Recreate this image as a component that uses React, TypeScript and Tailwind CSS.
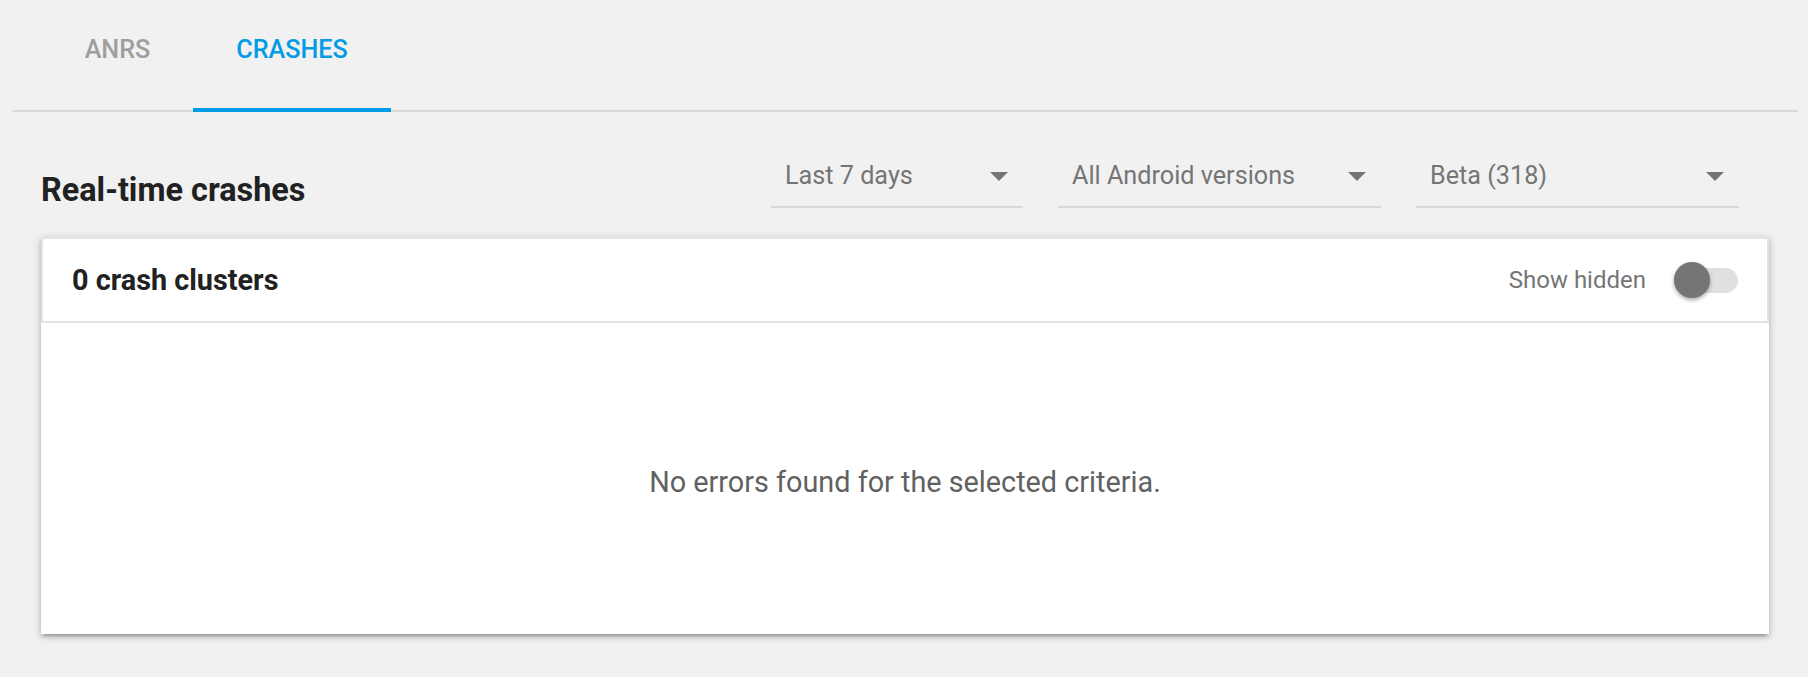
import React from "react";

function Arrow() {
  return (
    <svg width="18" height="9" viewBox="0 0 10 5" className="shrink-0">
      <path d="M0 0 L5 5 L10 0 Z" fill="#757575" />
    </svg>
  );
}

function Dropdown({ label, width }: { label: string; width: string }) {
  return (
    <div
      className={`${width} h-[58px] border-b-2 border-[#d9d9d9] pl-[14px] pr-[15px] pt-[11px] flex items-start justify-between`}
    >
      <span className="text-[25.2px] leading-[29px] text-[#757575]">{label}</span>
      <div className="pt-[11px]">
        <Arrow />
      </div>
    </div>
  );
}

export default function App() {
  return (
    <div
      className="w-full min-h-screen bg-[#f1f1f1] overflow-hidden"
      style={{ fontFamily: "Roboto, 'Noto Sans', sans-serif" }}
    >
      {/* Tabs */}
      <div className="ml-[12px] mr-[10px] h-[112px] border-b-2 border-[#d9d9d9] pl-[30px] flex">
        <div className="w-[151px] h-[112px] flex justify-center pt-[35px]">
          <span className="text-[25.2px] leading-[29px] font-medium text-[#9e9e9e]">ANRS</span>
        </div>
        <div className="w-[198px] h-[112px] flex justify-center pt-[35px] border-b-4 border-[#039be5]">
          <span className="text-[25.2px] leading-[29px] font-medium text-[#039be5]">CRASHES</span>
        </div>
      </div>

      <div className="ml-[41px] mr-[39px]">
        {/* Title row */}
        <div className="pt-[38px] flex items-start justify-between">
          <h1 className="mt-[21px] text-[32.4px] leading-[38px] font-bold text-[#212121]">
            Real-time crashes
          </h1>
          <div className="flex gap-[35px] mr-[30px]">
            <Dropdown label="Last 7 days" width="w-[252px]" />
            <Dropdown label="All Android versions" width="w-[323px]" />
            <Dropdown label="Beta (318)" width="w-[323px]" />
          </div>
        </div>

        {/* Card */}
        <div className="mt-[28px] shadow-[0_3px_4px_0_rgba(0,0,0,0.14),0_5px_2px_-3px_rgba(0,0,0,0.12),0_2px_9px_0_rgba(0,0,0,0.2)]">
          <div className="h-[86px] bg-white border-2 border-[#e3e3e3] pl-[29px] pr-[29px] flex items-center justify-between">
            <span className="text-[28.8px] leading-[33px] font-bold text-[#212121]">0 crash clusters</span>
            <div className="flex items-center gap-[28px]">
              <span className="text-[24px] leading-[28px] text-[#757575]">Show hidden</span>
              <div className="relative w-[64px] h-[36px] flex items-center">
                <div className="w-[64px] h-[25px] rounded-full bg-[#e0e0e0]" />
                <div className="absolute left-0 top-0 w-[36px] h-[36px] rounded-full bg-[#757575] shadow-[0_2px_4px_rgba(0,0,0,0.35)]" />
              </div>
            </div>
          </div>
          <div className="h-[311px] bg-white flex items-center justify-center">
            <span className="text-[28.8px] leading-[33px] text-[#616161] pt-[8px]">
              No errors found for the selected criteria.
            </span>
          </div>
        </div>
      </div>
    </div>
  );
}
